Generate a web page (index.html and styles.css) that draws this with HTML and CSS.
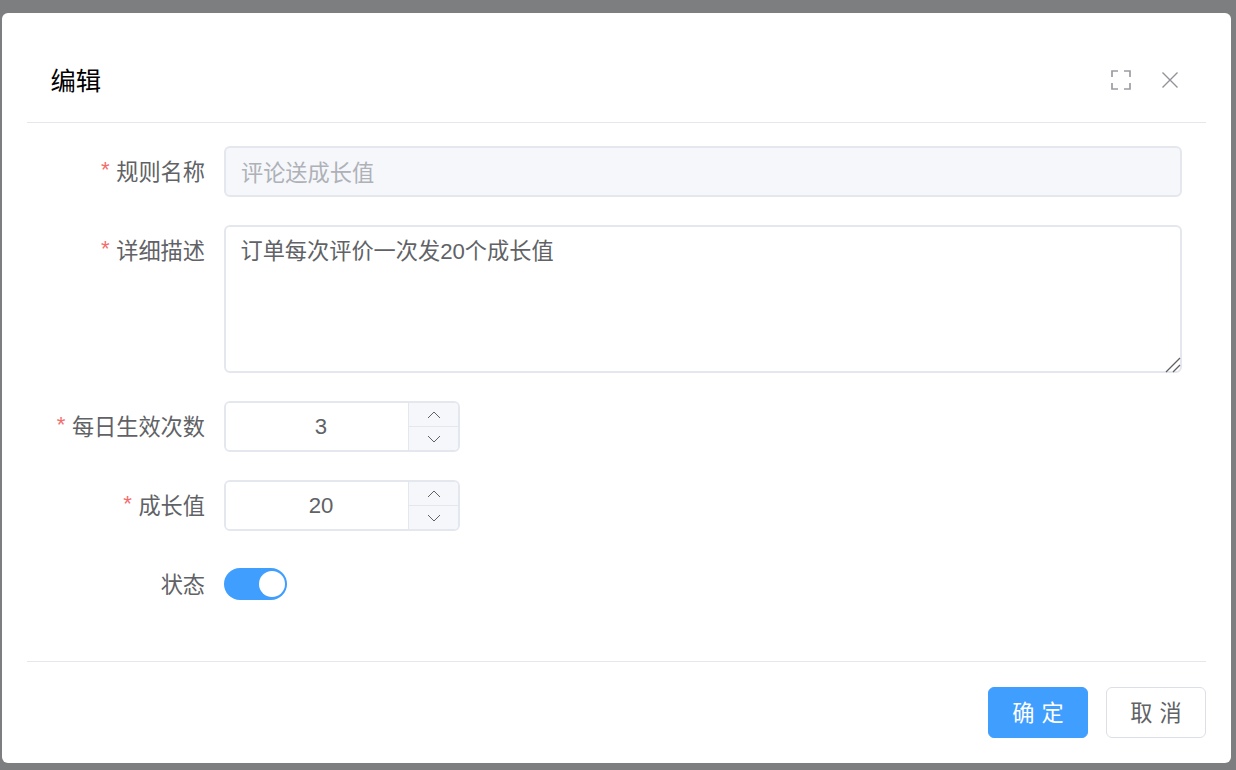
FILE: index.html
```html
<!DOCTYPE html>
<html lang="zh-CN">
<head>
<meta charset="utf-8">
<title>编辑</title>
<link rel="stylesheet" href="styles.css">
</head>
<body>
<div class="dialog">
  <header class="dialog-header">
    <span class="dialog-title">编辑</span>
    <div class="dialog-tools">
      <svg class="tool" viewBox="0 0 20 20" width="20" height="20" fill="none" stroke="#9a9da3" stroke-width="1.7"><path d="M1 7V1h6M13 1h6v6M19 13v6h-6M7 19H1v-6"/></svg>
      <svg class="tool" viewBox="0 0 18 18" width="18" height="18" fill="none" stroke="#909399" stroke-width="1.4"><path d="M1.500 1.500l15 15M16.500 1.500l-15 15"/></svg>
    </div>
  </header>
  <form class="form">
    <div class="row">
      <label class="label"><span class="req">*</span>规则名称</label>
      <input class="input" type="text" value="评论送成长值" disabled>
    </div>
    <div class="row">
      <label class="label"><span class="req">*</span>详细描述</label>
      <div class="textarea-wrap">
        <textarea class="textarea">订单每次评价一次发20个成长值</textarea>
        <svg class="grip" viewBox="0 0 16 16" width="16" height="16" fill="none" stroke="#5f6063" stroke-width="1.3"><path d="M1 15L15 1M8 15l7-7"/></svg>
      </div>
    </div>
    <div class="row">
      <label class="label"><span class="req">*</span>每日生效次数</label>
      <div class="number">
        <input class="number-value" type="text" value="3">
        <div class="steppers">
          <button type="button" class="step"><svg viewBox="0 0 14 8" width="14" height="8" fill="none" stroke="#606266" stroke-width="1"><path d="M1 7l6-6 6 6"/></svg></button>
          <button type="button" class="step"><svg viewBox="0 0 14 8" width="14" height="8" fill="none" stroke="#606266" stroke-width="1"><path d="M1 1l6 6 6-6"/></svg></button>
        </div>
      </div>
    </div>
    <div class="row">
      <label class="label"><span class="req">*</span>成长值</label>
      <div class="number">
        <input class="number-value" type="text" value="20">
        <div class="steppers">
          <button type="button" class="step"><svg viewBox="0 0 14 8" width="14" height="8" fill="none" stroke="#606266" stroke-width="1"><path d="M1 7l6-6 6 6"/></svg></button>
          <button type="button" class="step"><svg viewBox="0 0 14 8" width="14" height="8" fill="none" stroke="#606266" stroke-width="1"><path d="M1 1l6 6 6-6"/></svg></button>
        </div>
      </div>
    </div>
    <div class="row row-switch">
      <label class="label">状态</label>
      <div class="switch"><span class="knob"></span></div>
    </div>
  </form>
  <footer class="dialog-footer">
    <button type="button" class="btn btn-primary">确 定</button>
    <button type="button" class="btn">取 消</button>
  </footer>
</div>
</body>
</html>
```
FILE: styles.css
```css
* { box-sizing: border-box; }
html, body { height: 100%; }
body {
  margin: 0;
  background: #7d7e7f;
  padding: 13px 5px 7px 2px;
  font-family: "Liberation Sans", "Noto Sans CJK SC", sans-serif;
  overflow: hidden;
}
.dialog {
  height: 750px;
  background: #fff;
  border-radius: 6px;
  padding: 0 25px;
  display: flex;
  flex-direction: column;
}
.dialog-header {
  height: 110px;
  flex: none;
  display: flex;
  align-items: center;
  justify-content: space-between;
  padding: 51px 27px 24px 23.500px;
  border-bottom: 1px solid #e4e7ed;
}
.dialog-title { font-size: 25.300px; line-height: 34px; color: #000; }
.dialog-tools { display: flex; align-items: center; gap: 30px; padding-bottom: 2px; }
.tool { display: block; }
.form {
  flex: 1;
  padding: 23px 24px 0 0;
  display: flex;
  flex-direction: column;
  gap: 28px;
}
.row { display: flex; align-items: flex-start; }
.row-switch { margin-top: 9px; align-items: center; }
.label {
  width: 197px;
  height: 51px;
  padding: 2px 19px 0 0;
  flex: none;
  text-align: right;
  font-size: 22.200px;
  line-height: 50px;
  color: #606266;
}
.row-switch .label { line-height: 36px; height: 32px; padding-top: 0; }
.req { color: #f56c6c; margin-right: 6.500px; position: relative; top: -3px; }
.input, .textarea, .number {
  border: 2px solid #e4e7ed;
  border-radius: 6px;
  font-family: inherit;
  font-size: 22.200px;
  color: #606266;
}
.input {
  flex: 1;
  height: 51px;
  padding: 0 15px 2px 15px;
  background: #f5f7fa;
}
.input:disabled { color: #aeb1b7; -webkit-text-fill-color: #aeb1b7; opacity: 1; }
.textarea-wrap { flex: 1; height: 148px; position: relative; }
.textarea {
  width: 100%;
  height: 100%;
  padding: 8px 15px 7px 14.500px;
  line-height: 33px;
  background: #fff;
  outline: none;
  display: block;
  resize: none;
}
.grip { position: absolute; right: 1px; bottom: 0; pointer-events: none; }
.number {
  width: 236px;
  height: 51px;
  display: flex;
  overflow: hidden;
}
.number-value {
  flex: 1;
  min-width: 0;
  border: 0;
  outline: none;
  padding: 0 0 0 8px;
  text-align: center;
  font: inherit;
  color: inherit;
  background: #fff;
}
.steppers {
  width: 50px;
  flex: none;
  display: flex;
  flex-direction: column;
  border-left: 1px solid #e4e7ed;
  background: #f5f7fa;
}
.step {
  flex: 1;
  border: 0;
  padding: 0;
  background: transparent;
  display: flex;
  align-items: center;
  justify-content: center;
}
.step + .step { border-top: 1px solid #e4e7ed; }
.switch {
  width: 63px;
  height: 32px;
  border-radius: 16px;
  background: #409eff;
  display: flex;
  align-items: center;
  justify-content: flex-end;
  padding-right: 2px;
}
.knob { width: 26px; height: 26px; border-radius: 50%; background: #fff; }
.dialog-footer {
  height: 102px;
  flex: none;
  border-top: 1px solid #e4e7ed;
  display: flex;
  justify-content: flex-end;
  align-items: flex-start;
  gap: 18px;
  padding-top: 25px;
}
.btn {
  width: 100px;
  height: 51px;
  border: 1px solid #dcdfe6;
  border-radius: 6px;
  background: #fff;
  color: #606266;
  font-family: inherit;
  font-size: 22.200px;
  word-spacing: 1px;
  padding: 0 0 4px;
}
.btn-primary { background: #409eff; border-color: #409eff; color: #fff; }
```
